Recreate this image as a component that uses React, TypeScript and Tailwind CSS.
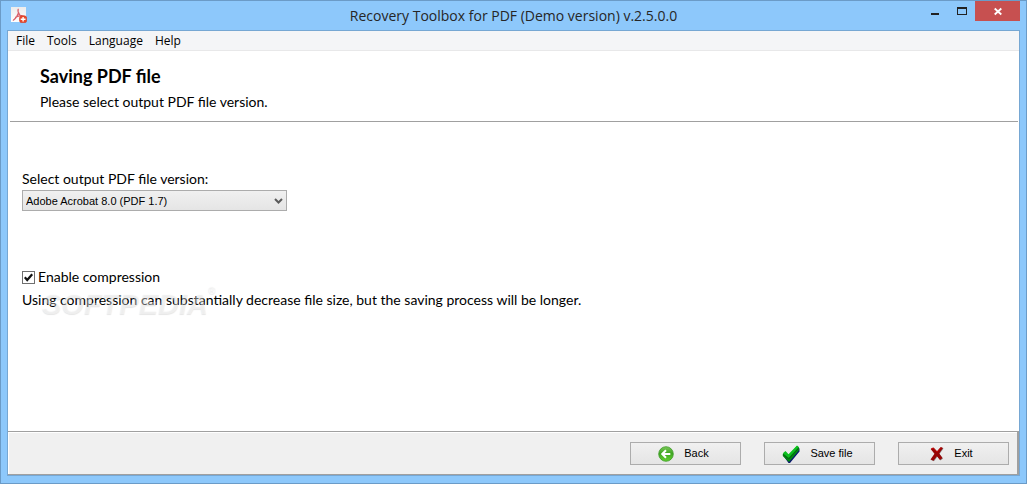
import { useState } from "react";
import type { ReactNode } from "react";

const menus = ["File", "Tools", "Language", "Help"];

const versions = [
  "Adobe Acrobat 8.0 (PDF 1.7)",
  "Adobe Acrobat 7.0 (PDF 1.6)",
  "Adobe Acrobat 6.0 (PDF 1.5)",
  "Adobe Acrobat 5.0 (PDF 1.4)",
];

function AppIcon() {
  return (
    <svg width="16" height="16" viewBox="0 0 16 16" aria-hidden="true">
      <defs>
        <linearGradient id="page" x1="0" y1="0" x2="0" y2="1">
          <stop offset="0" stopColor="#ececec" />
          <stop offset="1" stopColor="#ffffff" />
        </linearGradient>
      </defs>
      <rect width="15" height="15" fill="url(#page)" />
      <path
        d="M7.200 2.200C6.400 4.500 7.300 6.200 9 8.200c1.500 1 3 1.200 4.500 1.300M7.700 5.500C6.700 8.500 4.800 11.500 2.300 13.200M4.500 10.300C6.500 9.200 8.500 8.700 11 8.700"
        fill="none"
        stroke="#d9606a"
        strokeWidth="1.200"
        strokeLinecap="round"
      />
      <rect x="8.500" y="8.800" width="7.200" height="7" rx="2.500" fill="#ea4a2c" stroke="#cf3d28" strokeWidth="0.600" />
      <path d="M12.100 10v4.600M9.700 12.300h4.800" stroke="#fff" strokeWidth="1.400" />
    </svg>
  );
}

function BackIcon() {
  return (
    <svg width="16" height="16" viewBox="0 0 16 16" aria-hidden="true">
      <defs>
        <linearGradient id="ball" x1="0" y1="0" x2="0" y2="1">
          <stop offset="0" stopColor="#7cc95a" />
          <stop offset="0.450" stopColor="#3fa522" />
          <stop offset="1" stopColor="#62d030" />
        </linearGradient>
      </defs>
      <circle cx="8" cy="8" r="7.300" fill="url(#ball)" stroke="#3d9a28" strokeWidth="0.800" />
      <path d="M12.300 8H4.500M8 4.200 4.200 8 8 11.800" fill="none" stroke="#fff" strokeWidth="2" />
    </svg>
  );
}

function SaveIcon() {
  return (
    <svg width="18" height="18" viewBox="0 0 18 18" aria-hidden="true">
      <path d="M1.500 11 4 8.500 7 11.500 15.500 2 17.500 3.500V6.500L8 18H6.500Z" fill="#0a1470" />
      <path d="M.8 9 3.500 7 6.500 10.500 15 1 17 2.500V5.300L7 17 .8 11Z" fill="#008a12" />
      <path d="M.8 8.200 3.500 6 6.500 9.300 15 .5 16.800 2 6.700 12.800Z" fill="#0cc01e" />
      <path d="M1 9.500 6.700 14 16.500 3.300" fill="none" stroke="#0a5c10" strokeWidth="0.900" />
    </svg>
  );
}

function ExitIcon() {
  return (
    <svg width="14" height="16" viewBox="0 0 14 16" aria-hidden="true">
      <path
        d="M1.500 3 4 2 7.500 6 11.500 1.500 13.500 2.500 9.500 8 13 12.500 10.500 14.500 7.500 10.500 4 15.200 1.200 14 5.200 8.200Z"
        fill="#8e8e8e"
      />
      <path
        d="M.6 3 3.300 1.500 7 5.300 10.800 1 13 2 9.200 7.500 12.500 12 10 14 6.900 10.200 3.500 14.700.5 13.500 4.500 7.700Z"
        fill="#980505"
      />
      <path d="M1.200 2.900 3.300 2 7 6 11 1.500" fill="none" stroke="#c90808" strokeWidth="0.900" />
    </svg>
  );
}

function CommandButton({ icon, children }: { icon: ReactNode; children: ReactNode }) {
  return (
    <button
      type="button"
      className="flex h-[23px] w-[111px] items-center justify-center gap-2.5 border border-[#acacac] bg-linear-to-b from-[#f0f0f0] to-[#e5e5e5] pr-1 font-['Liberation_Sans',sans-serif] text-[11px] text-black"
    >
      {icon}
      {children}
    </button>
  );
}

export default function App() {
  const [version, setVersion] = useState(versions[0]);
  const [compress, setCompress] = useState(true);

  return (
    <div className="flex min-h-screen flex-col border border-[#6b9bc7] bg-[#8dc8fb] px-1.5 pb-[7px] font-['Lato',sans-serif] text-black">
      <header className="grid h-[29px] grid-cols-[1fr_auto_1fr] items-start">
        <div className="pt-1.5 pl-1">
          <AppIcon />
        </div>
        <h1 className="pt-[5px] font-['Open_Sans',sans-serif] text-[14px] leading-5 text-[#262626]">
          Recovery Toolbox for PDF (Demo version) v.2.5.0.0
        </h1>
        <div className="flex h-5 justify-end">
          <button type="button" aria-label="Minimize" className="flex w-7 items-center justify-center">
            <svg width="8" height="20" viewBox="0 0 8 20" aria-hidden="true">
              <path d="M0 12h8v2H0z" fill="#222" />
            </svg>
          </button>
          <button type="button" aria-label="Maximize" className="flex w-[26px] items-center justify-center">
            <svg width="10" height="20" viewBox="0 0 10 20" aria-hidden="true">
              <path d="M0 6h10v8H0zM1 8v5h8V8z" fillRule="evenodd" fill="#222" />
            </svg>
          </button>
          <button type="button" aria-label="Close" className="flex w-[45px] items-center justify-center bg-[#c75050]">
            <svg width="8" height="20" viewBox="0 0 8 20" aria-hidden="true">
              <path d="M.7 7.500 7.300 13.500M7.300 7.500.7 13.500" stroke="#fff" strokeWidth="1.800" />
            </svg>
          </button>
        </div>
      </header>

      <div className="flex flex-1 flex-col border border-[#76a7d3] bg-white">
        <nav className="flex h-5 items-center border-b border-[#e8e8e9] bg-[#f4f5f7] pl-0.5 font-['Open_Sans',sans-serif] text-[12px]">
          {menus.map((name) => (
            <button key={name} type="button" className="px-1.5 leading-4">
              {name}
            </button>
          ))}
        </nav>

        <section className="mr-px ml-0.5 border-b border-[#a0a0a0] pt-[13px] pb-[9px] pl-[30px]">
          <h2 className="text-[18px] leading-6 font-bold">Saving PDF file</h2>
          <p className="pt-1 text-[14px] leading-5">Please select output PDF file version.</p>
        </section>

        <main className="flex flex-1 flex-col items-start px-3.5 pt-[47px] text-[14px] leading-5">
          <label htmlFor="version">Select output PDF file version:</label>
          <div className="relative mt-px w-[265px]">
            <select
              id="version"
              value={version}
              onChange={(e) => setVersion(e.target.value)}
              className="block h-[21px] w-full appearance-none rounded-none border border-[#acacac] bg-linear-to-b from-[#f0f0f0] to-[#e5e5e5] pl-[3px] font-['Liberation_Sans',sans-serif] text-[11px] leading-4"
            >
              {versions.map((v) => (
                <option key={v}>{v}</option>
              ))}
            </select>
            <svg
              className="pointer-events-none absolute top-2 right-1"
              width="9"
              height="6"
              viewBox="0 0 9 6"
              aria-hidden="true"
            >
              <path d="M1 1 4.500 4.500 8 1" fill="none" stroke="#5b5b5b" strokeWidth="2" />
            </svg>
          </div>

          <label className="mt-14 flex items-center gap-[3px]">
            <span className="relative flex">
              <input
                type="checkbox"
                checked={compress}
                onChange={(e) => setCompress(e.target.checked)}
                className="peer size-[13px] appearance-none border border-[#6f6f6f] bg-white"
              />
              <svg
                className="pointer-events-none absolute inset-0 hidden peer-checked:block"
                width="13"
                height="13"
                viewBox="0 0 13 13"
                aria-hidden="true"
              >
                <path d="M2.800 6.300 5.200 9 10.200 3.200" fill="none" stroke="#111" strokeWidth="2.200" />
              </svg>
            </span>
            Enable compression
          </label>
          <div className="relative mt-[3px]">
            <p>Using compression can substantially decrease file size, but the saving process will be longer.</p>
            <span className="pointer-events-none absolute top-0 left-5 flex font-['Liberation_Sans',sans-serif] text-[29px] leading-7 font-bold text-white/40 italic [text-shadow:0_1px_1px_rgb(0_0_0/0.1)]">
              SOFTPEDIA<sup className="text-[10px] leading-3">®</sup>
            </span>
          </div>
        </main>

        <footer className="flex h-11 items-start justify-end gap-[23px] border-t border-r-2 border-b border-[#a0a0a0] bg-[#f0f0f0] pt-2.5 pr-2 shadow-[inset_1px_1px_0_#fff]">
          <CommandButton icon={<BackIcon />}>Back</CommandButton>
          <CommandButton icon={<SaveIcon />}>Save file</CommandButton>
          <CommandButton icon={<ExitIcon />}>Exit</CommandButton>
        </footer>
      </div>
    </div>
  );
}
